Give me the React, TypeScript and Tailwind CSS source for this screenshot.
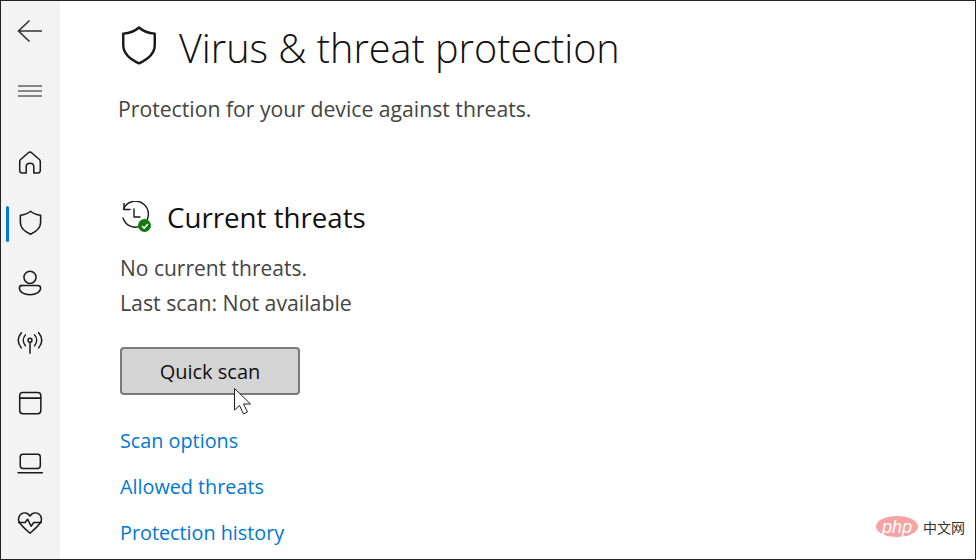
const stroke = { fill: 'none', stroke: 'currentColor', strokeWidth: 1.4, strokeLinejoin: 'round' as const, strokeLinecap: 'round' as const }

function Shield({ className }: { className: string }) {
  return (
    <svg viewBox="0 0 24 24" className={className} {...stroke}>
      <path d="M12 2 C14.5 4.2 17.5 5.2 21 5.5 V12 C21 16.5 17.5 20 12 22.5 C6.5 20 3 16.5 3 12 V5.5 C6.5 5.2 9.5 4.2 12 2 Z" />
    </svg>
  )
}

function NavIcon({ children }: { children: React.ReactNode }) {
  return <div className="flex h-[60px] items-center justify-center">{children}</div>
}

function Sidebar() {
  return (
    <div className="flex w-[59px] shrink-0 flex-col bg-[#f3f3f3] pr-[1px] text-[#1a1a1a]">
      <div className="flex h-[60px] items-center justify-center text-[#333]">
        <svg viewBox="0 0 26 24" className="h-[24px] w-[26px]" fill="none" stroke="currentColor" strokeWidth="1.6">
          <path d="M25 12 H2 M12.5 1.5 L1.5 12 L12.5 22.5" />
        </svg>
      </div>
      <div className="flex h-[60px] items-center justify-center">
        <svg viewBox="0 0 24 12" className="h-[12px] w-[24px]" fill="none" stroke="currentColor" strokeWidth="1">
          <path d="M0 1 H24 M0 6 H24 M0 11 H24" />
        </svg>
      </div>
      <div className="h-[12px]" />
      <NavIcon>
        <svg viewBox="0 0 24 24" className="h-[26px] w-[26px]" {...stroke}>
          <path d="M2.5 19 V10.5 C2.5 9.8 2.8 9.3 3.3 8.8 L10.5 2.5 C11.4 1.8 12.6 1.8 13.5 2.5 L20.7 8.8 C21.2 9.3 21.5 9.8 21.5 10.5 V19 C21.5 20.4 20.6 21.2 19.3 21.2 H15.5 V15.5 C15.5 13.6 14 12.2 12 12.2 C10 12.2 8.5 13.6 8.5 15.5 V21.2 H4.7 C3.4 21.2 2.5 20.4 2.5 19 Z" />
        </svg>
      </NavIcon>
      <NavIcon>
        <Shield className="-mt-[1px] h-[27px] w-[27px]" />
      </NavIcon>
      <NavIcon>
        <svg viewBox="0 0 24 24" className="h-[26px] w-[26px]" {...stroke}>
          <circle cx="12" cy="6.8" r="5.6" />
          <path d="M5 14.2 H19 C20.6 14.2 21.8 15.2 21.8 16.6 C21.8 20.2 17.5 22.8 12 22.8 C6.5 22.8 2.2 20.2 2.2 16.6 C2.2 15.2 3.4 14.2 5 14.2 Z" />
        </svg>
      </NavIcon>
      <NavIcon>
        <svg viewBox="0 0 24 24" className="h-[26px] w-[26px]" {...stroke}>
          <circle cx="12" cy="9.5" r="1.8" />
          <path d="M12 11.5 V21.5" />
          <path d="M7.8 4.5 C5.2 7.5 5.2 11.5 7.8 14.5 M16.2 4.5 C18.8 7.5 18.8 11.5 16.2 14.5" />
          <path d="M4 2.5 C0.3 7 0.3 12 4 16.5 M20 2.5 C23.7 7 23.7 12 20 16.5" />
        </svg>
      </NavIcon>
      <NavIcon>
        <svg viewBox="0 0 24 24" className="h-[26px] w-[26px]" {...stroke}>
          <rect x="2.5" y="2.2" width="19.5" height="19.8" rx="3" />
          <path d="M2.5 7.5 H22" />
        </svg>
      </NavIcon>
      <NavIcon>
        <svg viewBox="0 0 24 24" className="h-[26px] w-[26px]" {...stroke}>
          <rect x="3" y="4" width="18.5" height="13" rx="2.5" />
          <path d="M1 21 H23.5" />
        </svg>
      </NavIcon>
      <NavIcon>
        <svg viewBox="0 0 24 24" className="h-[26px] w-[26px]" {...stroke}>
          <path d="M12 5.5 C9.8 2.5 6.5 2 4 3.5 C1.5 5 0.8 8.5 2 11 C2.8 12.7 5 15.5 12 21.5 C19 15.5 21.2 12.7 22 11 C23.2 8.5 22.5 5 20 3.5 C17.5 2 14.2 2.5 12 5.5 Z" />
          <path d="M1.5 11.5 H7.5 L9.8 8.5 L13 15 L15.5 11.5 H22.5" />
        </svg>
      </NavIcon>
    </div>
  )
}

function Logo() {
  return (
    <div className="absolute right-[10px] bottom-[22px] flex items-center gap-[5px]">
      <div className="flex h-[21px] w-[42px] items-center justify-center rounded-[50%] bg-[#f7a3a3]">
        <span className="text-[18px] leading-none italic text-white font-['Liberation_Sans',sans-serif]">php</span>
      </div>
      <span className="text-[14px] leading-none text-[#333] font-['Noto_Sans_CJK_SC',sans-serif]">中文网</span>
    </div>
  )
}

export default function App() {
  return (
    <div className="relative flex h-[560px] w-[976px] overflow-hidden border border-[#222] bg-white font-['Open_Sans','Noto_Sans',sans-serif]">
      <Sidebar />
      <div className="flex-1 pl-[60px]">
        <div className="flex h-[95px] items-center">
          <Shield className="-mt-[7px] -ml-[2px] h-[42px] w-[42px] text-[#1a1a1a]" />
          <h1 className="ml-[19px] text-[39.6px] leading-none font-light text-[#111]">Virus &amp; threat protection</h1>
        </div>
        <p className="-ml-[2px] text-[21.2px] leading-[26px] text-[#444]">Protection for your device against threats.</p>
        <div className="mt-[80px] flex items-center">
          <div className="relative -mt-[1px] h-[32px] w-[32px]">
            <svg viewBox="0 0 32 32" className="h-[32px] w-[32px] text-[#1a1a1a]" {...stroke}>
              <path d="M3.5 8 A13 13 0 1 1 3 17" />
              <path d="M4 2.5 V8.5 H10" />
              <path d="M14 8 V16 H20" />
            </svg>
            <div className="absolute right-[1px] bottom-[1px] flex h-[13px] w-[13px] items-center justify-center rounded-full bg-[#107c10]">
              <svg viewBox="0 0 12 12" className="h-[10px] w-[10px]" fill="none" stroke="white" strokeWidth="1.8">
                <path d="M2.5 6.2 L5 8.5 L9.5 3.5" />
              </svg>
            </div>
          </div>
          <h2 className="ml-[15px] text-[27.7px] leading-none text-[#111]">Current threats</h2>
        </div>
        <p className="mt-[18px] text-[21px] leading-[35px] text-[#444]">No current threats.</p>
        <p className="text-[21.3px] leading-[34px] text-[#444]">Last scan: Not available</p>
        <div className="relative mt-[27px] w-[180px]">
          <button className="h-[48px] w-[180px] rounded-[4px] border-2 border-[#7a7a7a] bg-[#d4d4d4] pt-[1px] text-[20px] text-[#111]">Quick scan</button>
          <svg viewBox="0 0 20 30" className="absolute top-[40px] left-[113px] h-[30px] w-[20px]" fill="white" stroke="#222" strokeWidth="1">
            <path d="M1.5 1.5 V23 L6.5 18.5 L10.5 27 L14.5 25 L10.5 17 L17.5 17 Z" />
          </svg>
        </div>
        <div className="mt-[32px] flex flex-col gap-[18px] text-[19.8px] leading-[28px] text-[#0078d4]">
          <span>Scan options</span>
          <span>Allowed threats</span>
          <span>Protection history</span>
        </div>
      </div>
      <div className="absolute top-[205px] left-[5px] h-[36px] w-[3px] rounded-full bg-[#0078d4]" />
      <Logo />
    </div>
  )
}
